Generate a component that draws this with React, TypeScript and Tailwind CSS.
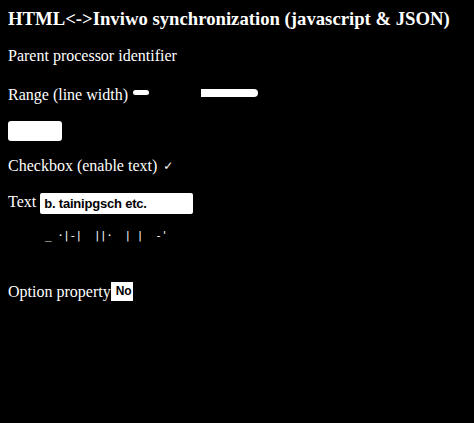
import React from "react";

export default function App() {
  return (
    <div className="w-[474px] h-[423px] bg-black text-white antialiased font-['Liberation_Serif',serif] px-2 overflow-hidden">
      <h3 className="text-[18.72px] font-bold leading-[22px] pt-2 whitespace-nowrap">
        HTML&lt;-&gt;Inviwo synchronization (javascript &amp; JSON)
      </h3>
      <div className="mt-[17px] text-[16px] leading-[18px]">Parent processor identifier</div>
      <div className="mt-[21px] flex items-start text-[16px] leading-[18px]">
        <span>Range (line width)</span>
        <div className="ml-[5px] mt-[4px] w-[16px] h-[5px] rounded-full bg-white" />
        <div className="ml-[52px] mt-[3px] w-[57px] h-[8px] rounded-r-full rounded-l-[1px] bg-white" />
      </div>
      <button className="mt-[17px] block w-[54px] h-[20px] rounded-[3px] bg-white" />
      <div className="mt-[16px] flex items-start text-[16px] leading-[18px]">
        <span>Checkbox (enable text)</span>
        <span className="ml-[6px] font-['DejaVu_Sans',sans-serif] text-[12px] leading-[18px]">✓</span>
      </div>
      <div className="mt-[18px] flex items-start text-[16px] leading-[18px]">
        <span>Text</span>
        <div className="ml-[4px] w-[153px] h-[21px] rounded-[2px] bg-white text-black font-['Liberation_Sans',sans-serif] font-bold text-[13px] leading-[21px] pl-[4px] tracking-[-0.2px] whitespace-nowrap overflow-hidden">
          b. tainipgsch etc.
        </div>
      </div>
      <div className="mt-[16px] ml-[37px] font-['DejaVu_Sans_Mono',monospace] text-[11px] leading-[12px] tracking-[-0.5px] whitespace-pre text-white">
        {"_ ·|-|  ||·  | |  -'"}
      </div>
      <div className="mt-[41px] flex items-start text-[16px] leading-[18px]">
        <span>Option property</span>
        <div className="-mt-[1px] w-[22px] h-[19px] bg-white text-black font-['Liberation_Sans',sans-serif] font-bold text-[12px] leading-[19px] pl-[5px] overflow-hidden">
          No
        </div>
      </div>
    </div>
  );
}
